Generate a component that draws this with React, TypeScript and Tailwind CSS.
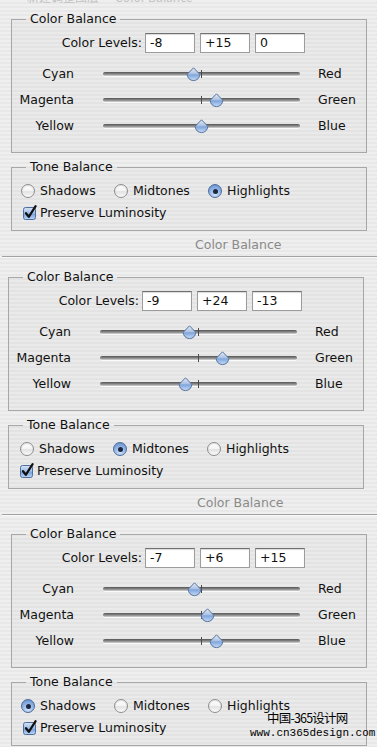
import React from "react";

function Thumb() {
  return (
    <svg width="15" height="15" viewBox="0 0 15 15">
      <defs>
        <linearGradient id="thumbGrad" x1="0" y1="0" x2="0" y2="1">
          <stop offset="0" stopColor="#e6edf8" />
          <stop offset="0.45" stopColor="#aec3e3" />
          <stop offset="0.55" stopColor="#7fa5dc" />
          <stop offset="1" stopColor="#c8ddf8" />
        </linearGradient>
      </defs>
      <path d="M7.5 0.8 L13.8 7.3 A6.3 6.3 0 0 1 1.2 7.3 Z" fill="url(#thumbGrad)" stroke="#56739e" strokeWidth="1" />
    </svg>
  );
}

function Slider({ value }: { value: number }) {
  const pos = ((value + 100) / 200) * 197;
  return (
    <div className="relative w-[197px] h-[26px] flex items-center">
      <div className="w-full h-[4px] rounded-full bg-[linear-gradient(#555555,#8c8c8c_55%,#d6d6d6)] shadow-[0_1px_0_rgba(255,255,255,0.8)]" />
      <div className="absolute left-[98px] top-[9px] w-px h-[8px] bg-[#4a4a4a]" />
      <div className="absolute top-[6px] leading-none" style={{ left: pos - 7.5 }}>
        <Thumb />
      </div>
    </div>
  );
}

function Radio({ on }: { on: boolean }) {
  return on ? (
    <span className="w-[14px] h-[14px] rounded-full border border-[#4c6c9c] bg-[radial-gradient(circle_at_50%_78%,#d2e4fb,#86aadf_60%,#5a86c8)] flex items-center justify-center shrink-0">
      <span className="w-[5px] h-[5px] rounded-full bg-[#1b2840]" />
    </span>
  ) : (
    <span className="w-[14px] h-[14px] rounded-full border border-[#8e8e8e] bg-[linear-gradient(#ffffff,#f3f3f3_50%,#e2e2e2_55%,#fbfbfb)] shadow-[inset_0_1px_1px_rgba(0,0,0,0.12)] shrink-0" />
  );
}

function Check() {
  return (
    <svg width="16" height="16" viewBox="0 0 16 16" className="shrink-0">
      <defs>
        <linearGradient id="chkGrad" x1="0" y1="0" x2="0" y2="1">
          <stop offset="0" stopColor="#d7e5f8" />
          <stop offset="0.5" stopColor="#99b9e6" />
          <stop offset="0.55" stopColor="#7aa1da" />
          <stop offset="1" stopColor="#bcd6f7" />
        </linearGradient>
      </defs>
      <rect x="1.5" y="2.5" width="12" height="12" rx="2" fill="url(#chkGrad)" stroke="#4e6e9e" strokeWidth="1" />
      <path d="M4 8.2 L6.8 11.8 L13.6 1.2" fill="none" stroke="#101010" strokeWidth="2.2" strokeLinecap="round" strokeLinejoin="round" />
    </svg>
  );
}

function Field({ v }: { v: string }) {
  return (
    <div className="w-[50px] h-[20px] bg-white border border-[#9c9c9c] border-t-[#707070] pl-[4px] leading-[18px] shadow-[inset_0_1px_1px_rgba(0,0,0,0.15)]">
      {v}
    </div>
  );
}

type PanelProps = {
  shift: string;
  top: string;
  levels: string[];
  values: number[];
  tone: number;
  tonePad: string;
  caption?: string;
};

function Panel({ shift, top, levels, values, tone, tonePad, caption }: PanelProps) {
  const rows: [string, string][] = [
    ["Cyan", "Red"],
    ["Magenta", "Green"],
    ["Yellow", "Blue"],
  ];
  const tones = ["Shadows", "Midtones", "Highlights"];
  return (
    <div className={top}>
      <fieldset className={`${shift} w-[356px] border border-[#a7a7a7] bg-black/[0.02]`}>
        <legend className="ml-[14px] px-[4px] leading-[16px]">Color Balance</legend>
        <div className="mt-[6px] flex items-center h-[20px]">
          <div className="w-[130px] text-right">Color Levels:</div>
          <div className="ml-[3px] flex gap-[5px]">
            {levels.map((l, i) => (
              <Field key={i} v={l} />
            ))}
          </div>
        </div>
        <div className="mt-[8px] pb-[13px]">
          {rows.map(([a, b], i) => (
            <div key={a} className="flex items-center h-[26px]">
              <div className="w-[62px] text-right">{a}</div>
              <div className="ml-[29px]">
                <Slider value={values[i]} />
              </div>
              <div className="ml-[18px]">{b}</div>
            </div>
          ))}
        </div>
      </fieldset>
      <fieldset className={`${shift} mt-[6px] w-[356px] border border-[#a7a7a7] bg-black/[0.02]`}>
        <legend className="ml-[14px] px-[4px] leading-[16px]">Tone Balance</legend>
        <div className={`mt-[6px] h-[20px] grid grid-cols-[93px_94px_auto] items-center ${tonePad}`}>
          {tones.map((t, i) => (
            <div key={t} className="flex items-center gap-[5px]">
              <Radio on={tone === i} />
              <span>{t}</span>
            </div>
          ))}
        </div>
        <div className="mt-[2px] h-[20px] flex items-center gap-[2px] pl-[10px] mb-[7px]">
          <Check />
          <span>Preserve Luminosity</span>
        </div>
      </fieldset>
      {caption && (
        <>
          <div className={`mt-[4px] h-[20px] flex items-center text-[#8a8a8a] ${caption}`}>Color Balance</div>
          <div className="mt-[1px] ml-[2px] h-px bg-[#a2a2a2] shadow-[0_1px_0_#f8f8f8]" />
        </>
      )}
    </div>
  );
}

export default function App() {
  return (
    <div className="relative w-[377px] h-[747px] overflow-hidden bg-[repeating-linear-gradient(180deg,#efefef_0px,#efefef_2px,#e8e8e8_2px,#e8e8e8_4px)] text-[#111111] text-[12.5px] font-['DejaVu_Sans',sans-serif]">
      <div className="h-[5px] overflow-hidden pl-[27px]">
        <div className="-mt-[10px] text-[12px] leading-[14px] text-[#c2c2c2] font-['Noto_Sans_CJK_SC',sans-serif]">
          新建调整图层 — Color Balance
        </div>
      </div>
      <Panel
        top="mt-[6px]"
        shift="ml-[11px]"
        levels={["-8", "+15", "0"]}
        values={[-8, 15, 0]}
        tone={2}
        tonePad="pl-[9px]"
        caption="pl-[195px]"
      />
      <Panel
        top="mt-[12px]"
        shift="ml-[8px]"
        levels={["-9", "+24", "-13"]}
        values={[-9, 24, -13]}
        tone={1}
        tonePad="pl-[11px]"
        caption="pl-[197px]"
      />
      <Panel
        top="mt-[11px]"
        shift="ml-[11px]"
        levels={["-7", "+6", "+15"]}
        values={[-7, 6, 15]}
        tone={0}
        tonePad="pl-[9px]"
      />
      <div className="absolute left-[267px] top-[711px] text-[12.5px] leading-[14px] tracking-[-0.8px] text-black font-['Noto_Sans_CJK_SC',sans-serif]">
        中国-365设计网
      </div>
      <div className="absolute left-[250px] top-[728px] text-[11px] leading-[11px] text-black font-['Liberation_Mono',monospace]">
        www.cn365design.com
      </div>
    </div>
  );
}
